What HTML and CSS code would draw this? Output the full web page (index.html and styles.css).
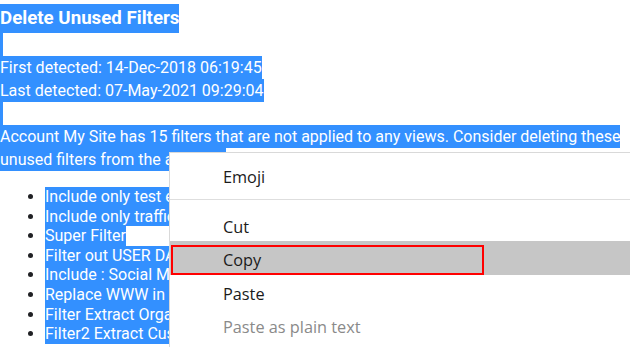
FILE: index.html
```html
<!DOCTYPE html>
<html lang="en">
<head>
    <meta charset="UTF-8">
    <title>Delete Unused Filters</title>
    <link rel="stylesheet" href="styles.css">
</head>
<body>
    <div class="report">
        <h1 class="title"><span class="sel">Delete Unused Filters</span></h1>
        <div class="blank"></div>
        <p class="line"><span class="sel">First detected: 14-Dec-2018 06:19:45</span></p>
        <p class="line"><span class="sel">Last detected: 07-May-2021 09:29:04</span></p>
        <div class="blank"></div>
        <p class="line"><span class="sel">Account My Site has 15 filters that are not applied to any views. Consider deleting these</span></p>
        <p class="line"><span class="sel">unused filters from the account.</span></p>

        <ul class="filters">
            <li><span class="sel">Include only test e</span></li>
            <li><span class="sel">Include only traffic</span></li>
            <li><span class="sel">Super Filter</span></li>
            <li><span class="sel">Filter out USER DA</span></li>
            <li><span class="sel">Include : Social Me</span></li>
            <li><span class="sel">Replace WWW in h</span></li>
            <li><span class="sel">Filter Extract Orga</span></li>
            <li><span class="sel">Filter2 Extract Cus</span></li>
        </ul>
    </div>

    <!-- right-click menu drawn over the selected text -->
    <div class="context-menu">
        <div class="menu-item">Emoji</div>
        <div class="menu-sep"></div>
        <div class="menu-item">Cut</div>
        <div class="menu-item hover">Copy</div>
        <div class="menu-item">Paste</div>
        <div class="menu-item disabled">Paste as plain text</div>
        <div class="mark"></div>
    </div>
</body>
</html>
```

FILE: styles.css
```css
* {
    margin: 0;
    padding: 0;
    box-sizing: border-box;
}

html, body {
    height: 100%;
    overflow: hidden;
}

body {
    background-color: white;
    color: #202124;
    font-family: Roboto, 'Liberation Sans', sans-serif;
    font-size: 16px;
}

/* fake text selection */
.sel {
    display: inline-block;
    background-color: #3390ff;
    color: white;
    white-space: nowrap;
}

.title {
    padding-top: 4px;
    font-size: 18.7px;
    font-weight: bold;
    line-height: 29px;
}

.blank {
    height: 23px;
    width: 3px;
    background-color: #3390ff;
}

.line {
    line-height: 23px;
}

.filters {
    margin-top: 16px;
    padding-left: 45px;
    line-height: 19.6px;
}

.context-menu {
    position: absolute;
    left: 169px;
    top: 152px;
    width: 461px;
    height: 195px;
    padding-top: 5px;
    background-color: white;
    border: 1px solid #d9d9d9;
    border-right: none;
    border-bottom: none;
    font-family: 'Open Sans', 'Noto Sans', sans-serif;
    font-size: 16.3px;
    color: #1b1b1b;
}

.menu-item {
    height: 33px;
    padding-top: 5px;
    line-height: 28px;
    padding-left: 53px;
}

.menu-item.hover {
    height: 34px;
    background-color: #c6c6c6;
}

.menu-item.disabled {
    color: #8a8a8a;
}

.menu-sep {
    height: 1px;
    margin: 8px 0;
    background-color: #dedede;
}

/* red annotation box round Copy */
.mark {
    position: absolute;
    left: 1px;
    top: 92px;
    width: 313px;
    height: 30px;
    border: 2px solid #ff0000;
}
```
